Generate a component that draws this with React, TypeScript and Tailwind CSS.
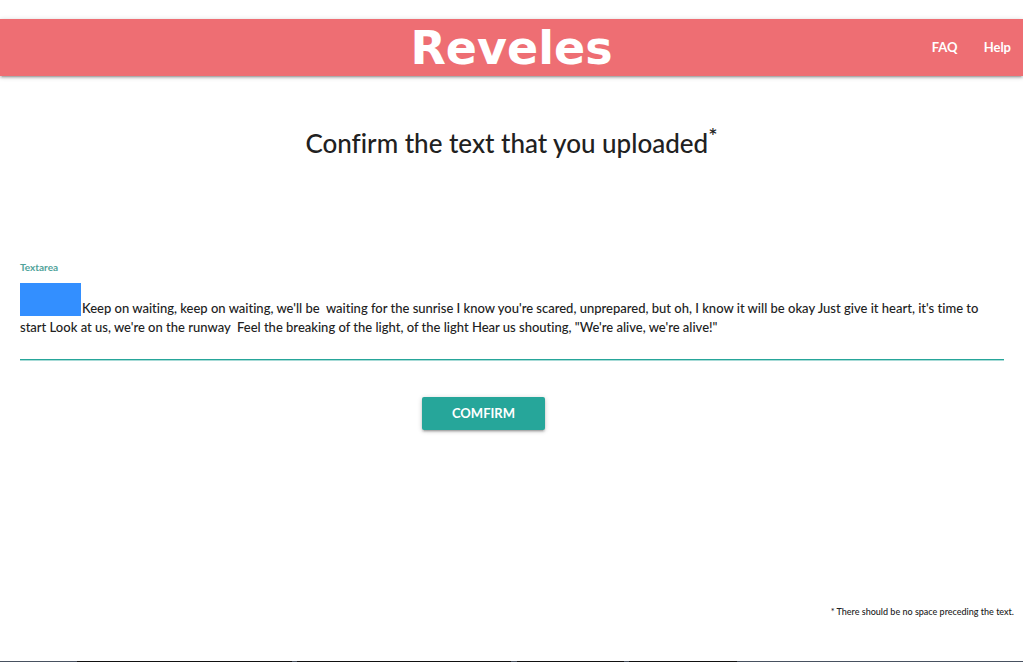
const uploadedText =
  "Keep on waiting, keep on waiting, we'll be  waiting for the sunrise I know you're scared, unprepared, but oh, I know it will be okay Just give it heart, it's time to start Look at us, we're on the runway  Feel the breaking of the light, of the light Hear us shouting, \"We're alive, we're alive!\"";

function Header() {
  return (
    <header className="relative mt-[19px] flex h-[57px] shrink-0 items-center justify-center bg-[#ee6e73] text-white shadow-[0_2px_2px_rgba(0,0,0,0.14),0_3px_1px_-2px_rgba(0,0,0,0.12),0_1px_5px_rgba(0,0,0,0.2)]">
      <a href="#" className="font-['DejaVu_Sans',sans-serif] text-[46px] leading-none font-bold">
        Reveles
      </a>
      <nav className="absolute inset-y-0 right-3 flex items-center gap-[26px] text-[13px] font-bold">
        <a href="#faq">FAQ</a>
        <a href="#help">Help</a>
      </nav>
    </header>
  );
}

function TaskbarEdge() {
  return (
    <div className="flex h-px shrink-0 bg-[#485160]">
      <div className="w-[7.5%]" />
      <div className="w-[21%] bg-[#111111]" />
      <div className="w-[0.5%]" />
      <div className="w-[21%] bg-[#111111]" />
      <div className="w-[0.5%]" />
      <div className="w-[10.5%] bg-[#111111]" />
      <div className="w-[0.5%]" />
      <div className="w-[10.5%] bg-[#111111]" />
    </div>
  );
}

export default function App() {
  return (
    <div className="flex min-h-screen flex-col bg-white font-['Lato',sans-serif] text-[#212121]">
      <Header />
      <main className="flex grow flex-col">
        <h1 className="mt-[49px] text-center text-[26px] leading-9 font-medium [font-variant-ligatures:none]">
          Confirm the text that you uploaded<sup className="top-[-9px] text-[22px]">*</sup>
        </h1>
        <form className="mt-[98px] flex flex-col pr-[19px] pl-5" onSubmit={(e) => e.preventDefault()}>
          <label htmlFor="uploaded" className="text-[10px] leading-4 font-bold text-[#51a39a]">
            Textarea
          </label>
          <div className="relative mt-2">
            <textarea
              id="uploaded"
              defaultValue={uploadedText}
              spellCheck={false}
              className="block h-[77px] w-full resize-none overflow-hidden border-b border-[#26a69a] pt-4 indent-[62px] text-[13px] leading-[19px] font-medium shadow-[0_1px_0_#a8dbd7] outline-none [font-variant-ligatures:none]"
            />
            <div className="pointer-events-none absolute top-0 left-0 h-[33px] w-[61px] bg-[#338fff]" />
          </div>
          <div className="mt-[37px] flex justify-center pr-[57px]">
            <button
              type="submit"
              className="h-[33px] w-[123px] rounded-[2px] bg-[#26a69a] text-[13px] font-bold text-white shadow-[0_2px_2px_rgba(0,0,0,0.14),0_3px_1px_-2px_rgba(0,0,0,0.12),0_1px_5px_rgba(0,0,0,0.2)]"
            >
              COMFIRM
            </button>
          </div>
        </form>
        <p className="mt-auto mr-[9px] mb-[41px] text-right text-[9px] leading-4 font-medium">
          * There should be no space preceding the text.
        </p>
      </main>
      <TaskbarEdge />
    </div>
  );
}
